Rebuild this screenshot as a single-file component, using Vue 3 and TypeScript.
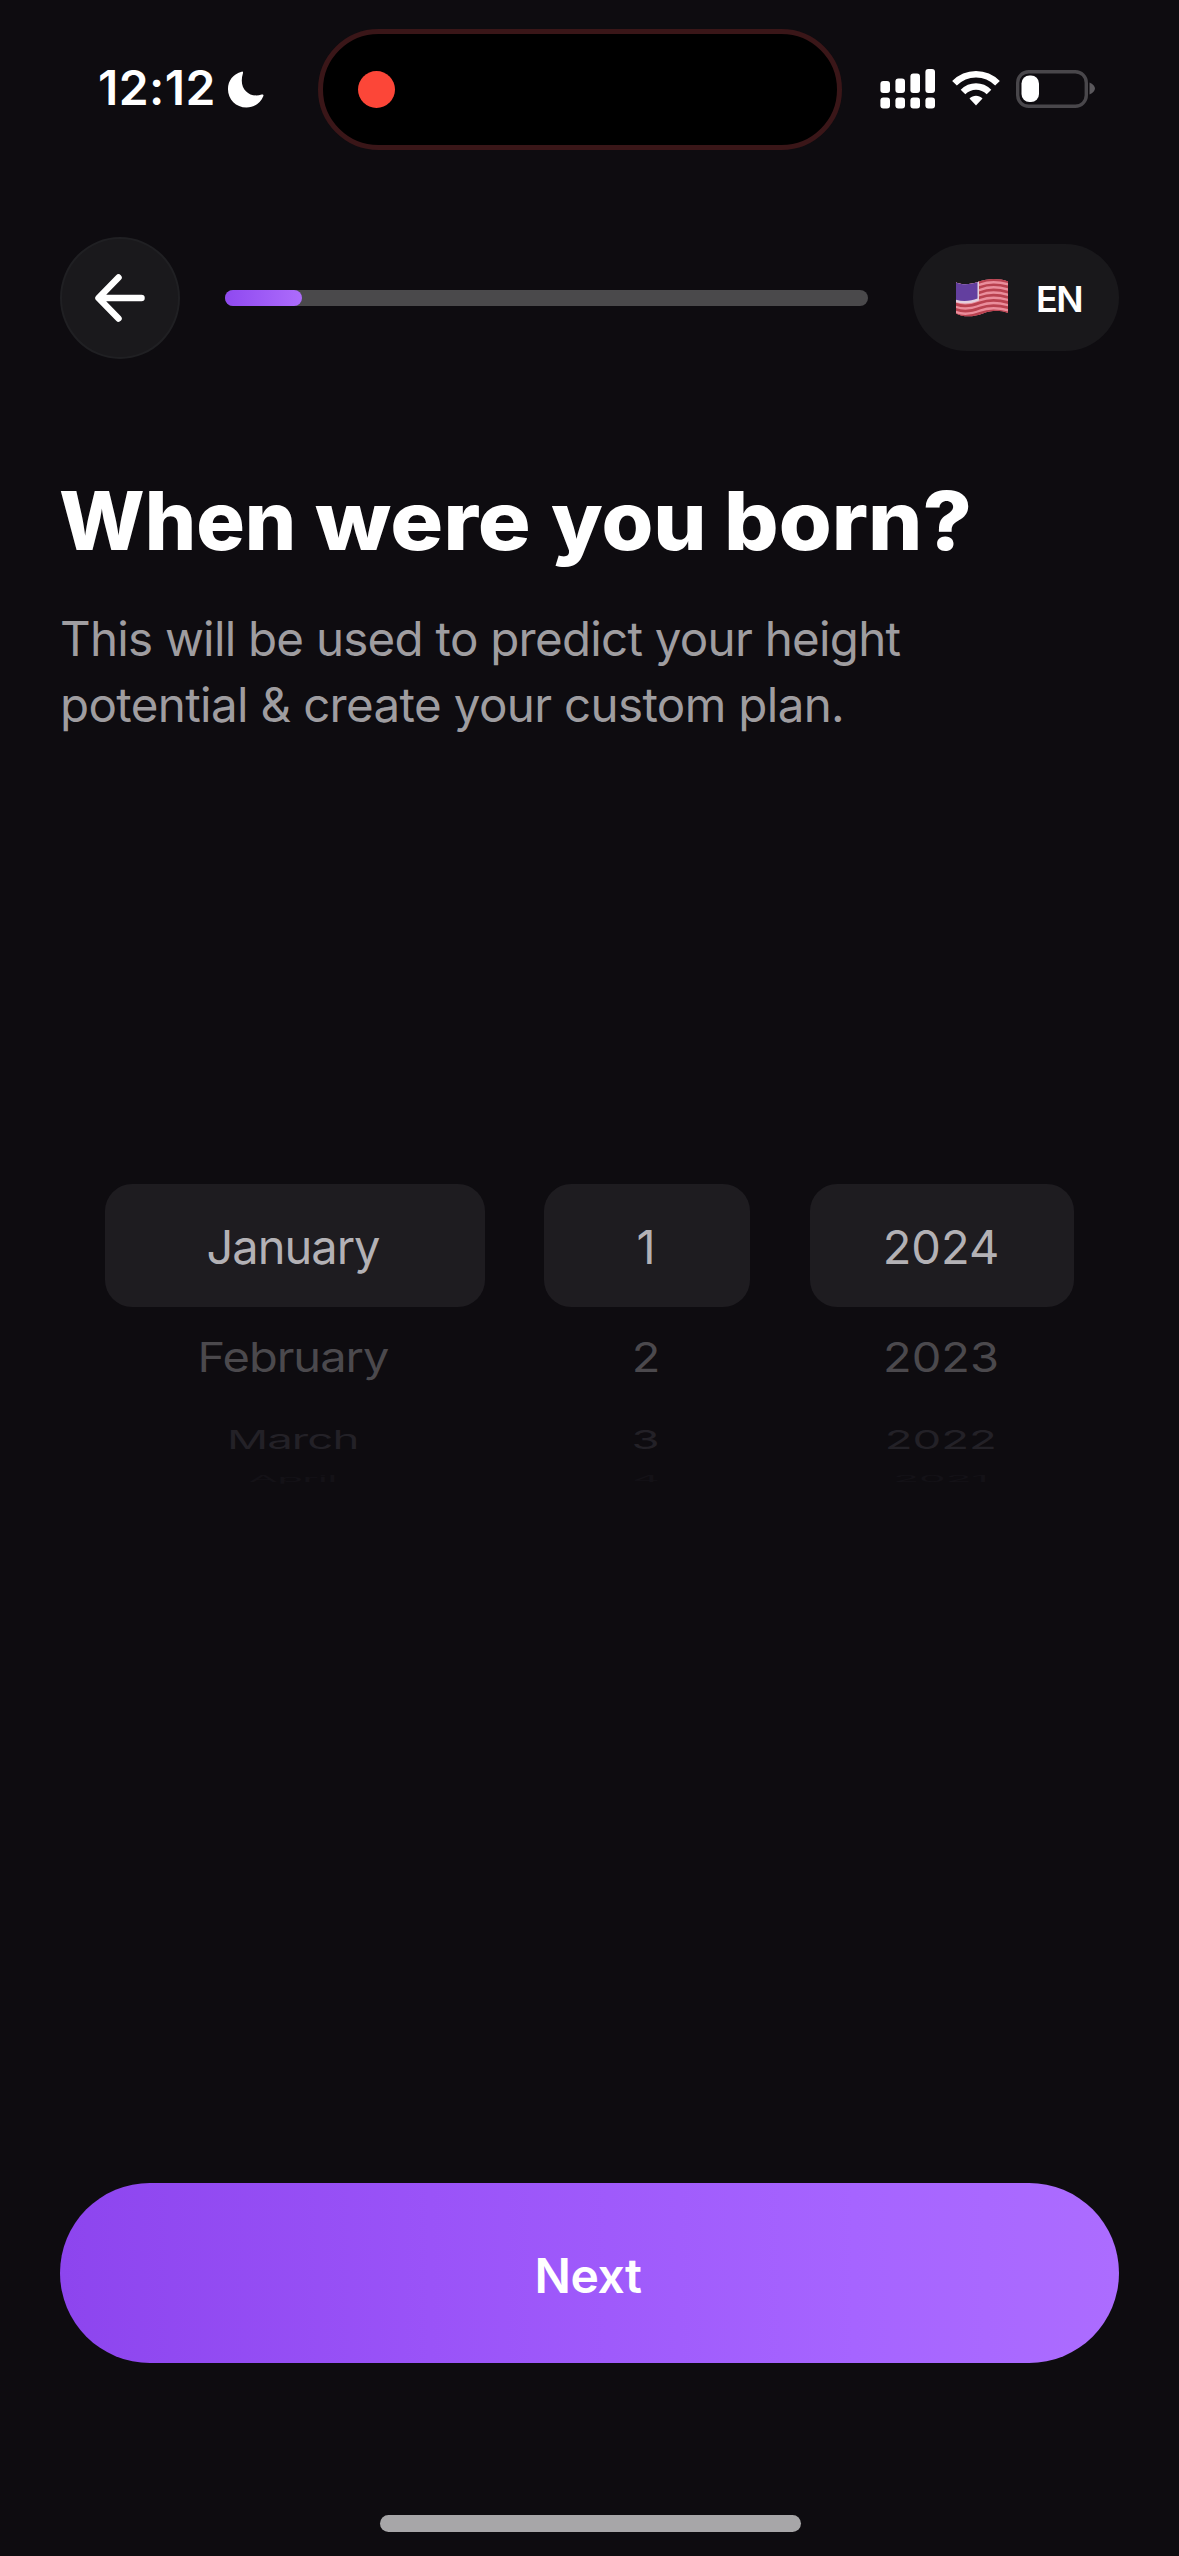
<script setup lang="ts">
interface WheelColumn {
  name: string
  values: string[]
}

const progress = 12

const columns: WheelColumn[] = [
  { name: 'month', values: ['January', 'February', 'March', 'April'] },
  { name: 'day', values: ['1', '2', '3', '4'] },
  { name: 'year', values: ['2024', '2023', '2022', '2021'] },
]

const bars = [
  { x: 0, top: 12 },
  { x: 15, top: 9.5 },
  { x: 30, top: 4.5 },
  { x: 45, top: 0 },
]

const stripes = [0, 1, 2, 3, 4, 5, 6]
</script>

<template>
  <div class="screen">
    <div class="status">
      <div class="clock">
        <span class="time">12:12</span>
        <svg class="moon" width="38" height="39" viewBox="0 0 40 40">
          <path d="M15.5 1.2C6.500 3.500 1 10.500 1 19.500C1 30.500 9.500 39 20.500 39C28.500 39 35.500 34 38.300 26.800C38.700 25.500 37.800 24.800 36.500 25.300C24 29.500 11.500 19.500 16.800 3C17.200 1.600 16.600 1 15.500 1.200Z" fill="#fff" />
        </svg>
      </div>
      <div class="island">
        <span class="rec"></span>
      </div>
      <div class="indicators">
        <svg width="56" height="40" viewBox="0 0 56 40">
          <g fill="#fff">
            <template v-for="b in bars" :key="b.x">
              <rect :x="b.x + 0.4" :y="b.top" width="9.600" :height="24 - b.top" rx="3" />
              <rect :x="b.x + 0.4" y="28.500" width="9.600" height="11" rx="3" />
            </template>
          </g>
        </svg>
        <svg class="wifi" width="48" height="36" viewBox="0 0 48 36">
          <g fill="none" stroke="#fff" stroke-width="6.600">
            <path d="M2.500 13.300C14.500 1.200 33.500 1.200 45.500 13.300" />
            <path d="M11 22C18.500 14.700 29.500 14.700 37 22" />
          </g>
          <path d="M17.500 28.500C21.200 24.700 26.800 24.700 30.500 28.500L24 35.500Z" fill="#fff" />
        </svg>
        <svg class="battery" width="80" height="38" viewBox="0 0 80 38">
          <rect x="1.700" y="1.700" width="68.600" height="34.600" rx="11" fill="none" stroke="#49474b" stroke-width="3.400" />
          <rect x="5.500" y="5.500" width="17.500" height="26.500" rx="8" fill="#fff" />
          <path d="M73.500 12.500C77 14 79 16.500 79 18.500C79 20.500 77 23 73.500 24.500Z" fill="#5a585c" />
        </svg>
      </div>
    </div>

    <header class="topbar">
      <button class="back" aria-label="Back">
        <svg width="56" height="56" viewBox="0 0 56 56" fill="none" stroke="#fff" stroke-width="6.500" stroke-linecap="round" stroke-linejoin="round">
          <path d="M49.500 28H7M26.500 7.500L6.500 28L26.500 48.500" />
        </svg>
      </button>
      <div class="track"><div class="fill" :style="{ width: progress + '%' }"></div></div>
      <div class="lang">
        <svg width="54" height="40" viewBox="0 0 54 40">
          <defs>
            <clipPath id="wave">
              <path d="M1 4.500C8 7.500 16 6.500 24 3.500C32 0.500 44 0 53 3.500V35C44 31.500 36 32.500 28 35.500C20 38.500 9 40 1 35.500Z" />
            </clipPath>
          </defs>
          <g clip-path="url(#wave)">
            <rect width="54" height="40" fill="#ea8d9b" />
            <g fill="none" stroke="#b9414f" stroke-width="2.700">
              <path v-for="s in stripes" :key="s" :d="`M0 ${5 + s * 5.2}C8 ${8.500 + s * 5.2} 16 ${7.500 + s * 5.2} 25 ${4 + s * 5.2}S44 ${1 + s * 5.2} 54 ${4 + s * 5.2}`" />
            </g>
            <path d="M0 2H24V22.500C17 25.500 8 26.500 0 24Z" fill="#e3cfdd" />
            <path d="M0 2H22.500V20.500C16 23 8 24 0 21.500Z" fill="#633f9f" />
          </g>
        </svg>
        <span>EN</span>
      </div>
    </header>

    <main class="content">
      <h1>
        <span class="w1">When</span> <span class="w2">were</span> <span class="w3">you</span> <span class="w4">born?</span>
      </h1>
      <p>This will be used to predict your height<br /><span class="loose">potential &amp; create your custom plan.</span></p>
    </main>

    <section class="picker">
      <div v-for="c in columns" :key="c.name" class="wheel" :class="c.name">
        <div v-for="(v, i) in c.values" :key="v" class="row" :class="'row-' + i"><span>{{ v }}</span></div>
      </div>
    </section>

    <button class="next">Next</button>
    <div class="home"></div>
  </div>
</template>

<style>
body {
  background: #0e0c10;
}
</style>

<style scoped>
.screen {
  box-sizing: border-box;
  display: flex;
  flex-direction: column;
  width: 1179px;
  height: 2556px;
  overflow: hidden;
  background: #0e0c10;
  color: #fff;
  font-family: Inter, "Liberation Sans", sans-serif;
}
button {
  padding: 0;
  font-family: inherit;
  color: inherit;
}
svg {
  display: block;
  flex: none;
}
.status {
  display: flex;
  align-items: center;
  height: 178px;
}
.clock {
  display: flex;
  align-items: center;
  box-sizing: border-box;
  width: 318px;
  padding-left: 98px;
}
.time {
  width: 129px;
  margin-top: -2px;
  font-size: 48px;
  line-height: 60px;
  font-weight: 600;
  letter-spacing: 0.400px;
  white-space: nowrap;
}
.island {
  box-sizing: border-box;
  display: flex;
  align-items: center;
  width: 524px;
  height: 121px;
  padding-left: 35px;
  border: 5px solid #3a1618;
  border-radius: 61px;
  background: #000;
}
.rec {
  width: 37px;
  height: 37px;
  border-radius: 50%;
  background: #fc4638;
}
.indicators {
  display: flex;
  align-items: center;
  margin-left: 38px;
  margin-top: -1px;
}
.wifi {
  margin-left: 15.500px;
  margin-top: -2px;
}
.battery {
  margin-left: 16.500px;
}
.topbar {
  display: flex;
  align-items: center;
  height: 122px;
  margin: 59px 60px 0;
}
.back {
  box-sizing: border-box;
  display: flex;
  align-items: center;
  justify-content: center;
  width: 120px;
  height: 122px;
  border: 2px solid #202023;
  border-radius: 50%;
  background: #1a191c;
}
.track {
  width: 643px;
  height: 16px;
  margin-left: 45px;
  border-radius: 8px;
  background: #4a494b;
}
.fill {
  height: 100%;
  border-radius: 8px;
  background: linear-gradient(90deg, #8f49f0, #ad6cfb);
}
.lang {
  box-sizing: border-box;
  display: flex;
  align-items: center;
  width: 206px;
  height: 107px;
  margin: -1px 0 0 45px;
  padding-left: 42px;
  border-radius: 54px;
  background: #19181b;
}
.lang span {
  margin: 2px 0 0 27px;
  font-size: 36px;
  font-weight: 600;
  letter-spacing: -1.500px;
}
.content {
  padding: 107px 60px 0;
}
h1 {
  display: flex;
  margin: 0 0 0 -1px;
  font-size: 81px;
  line-height: 110px;
  font-weight: 800;
  white-space: nowrap;
}
h1 span {
  transform-origin: 0 50%;
}
.w1 {
  width: 256px;
}
.w2 {
  width: 236px;
  transform: scaleX(1.09);
}
.w3 {
  width: 173px;
  transform: scaleX(1.035);
}
.w4 {
  transform: scaleX(1.058);
}
p {
  margin: 30px 0 0;
  font-size: 47.500px;
  line-height: 66px;
  letter-spacing: -0.740px;
  color: #9f9da0;
  white-space: nowrap;
}
.loose {
  letter-spacing: -0.650px;
}
.picker {
  display: flex;
  height: 310px;
  margin: 446px 105px 0;
}
.wheel {
  display: flex;
  flex-direction: column;
}
.month {
  width: 380px;
  letter-spacing: -1px;
}
.day {
  width: 206px;
  margin: 0 60px 0 59px;
}
.year {
  width: 264px;
}
.row {
  display: flex;
  flex: none;
  align-items: center;
  justify-content: center;
  font-size: 47px;
  line-height: 60px;
}
.row span {
  display: block;
  margin-right: 2px;
}
.month .row span {
  margin-right: 4px;
}
.row-0 {
  height: 123px;
  border-radius: 27px;
  background: #1e1c20;
  color: #b3b1b5;
}
.row-0 span {
  margin-top: 3px;
}
.row-1 {
  height: 100px;
  color: #4b494d;
}
.row-1 span {
  transform: scaleY(0.87);
}
.row-2 {
  height: 64px;
  color: #232127;
}
.row-2 span {
  transform: scale(0.97, 0.56);
}
.row-3 {
  height: 15px;
  color: #141217;
}
.row-3 span {
  transform: scale(0.9, 0.18);
}
.next {
  flex: none;
  box-sizing: border-box;
  height: 180px;
  margin: 689px 60px 0;
  padding: 4px 3px 0 0;
  border: 0;
  border-radius: 90px;
  background: linear-gradient(90deg, #8d45ee, #9a53f8 35%, #a664ff 75%, #ac6cff);
  font-size: 48px;
  font-weight: 600;
  letter-spacing: -0.500px;
}
.home {
  flex: none;
  width: 421px;
  height: 17px;
  margin: 152px 0 0 379.500px;
  border-radius: 9px;
  background: #a7a6a8;
}
</style>
